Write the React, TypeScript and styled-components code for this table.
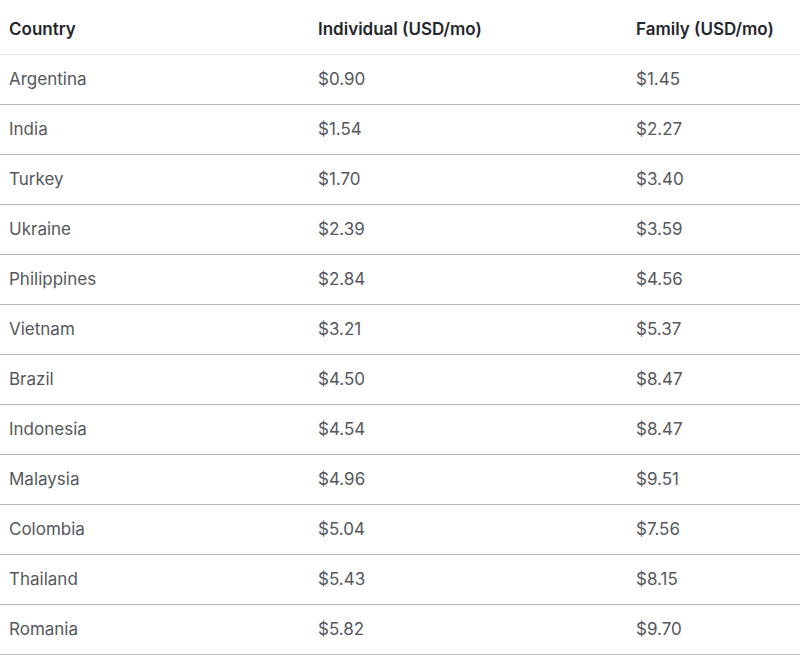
import React from "react";
import styled, { createGlobalStyle } from "styled-components";

const Global = createGlobalStyle`
  html, body { margin: 0; padding: 0; background: #ffffff; }
  body { font-family: Inter, "Noto Sans", sans-serif; -webkit-font-smoothing: antialiased; }
`;

const Table = styled.div`
  width: 800px;
  display: flex;
  flex-direction: column;
`;

const Row = styled.div<{ $head?: boolean }>`
  display: grid;
  grid-template-columns: 309px 318px 1fr;
  height: ${(p) => (p.$head ? "55px" : "50px")};
  box-sizing: border-box;
  padding-top: ${(p) => (p.$head ? "5px" : "0")};
  padding-bottom: 2px;
  align-items: center;
  border-bottom: 1px solid ${(p) => (p.$head ? "#e6e6e6" : "#b9b9b9")};
`;

const Cell = styled.div<{ $head?: boolean }>`
  padding-left: 9px;
  font-size: 17px;
  font-weight: ${(p) => (p.$head ? 600 : 400)};
  color: ${(p) => (p.$head ? "#24272c" : "#55585d")};
  white-space: nowrap;
`;

const data: [string, string, string][] = [
  ["Argentina", "$0.90", "$1.45"],
  ["India", "$1.54", "$2.27"],
  ["Turkey", "$1.70", "$3.40"],
  ["Ukraine", "$2.39", "$3.59"],
  ["Philippines", "$2.84", "$4.56"],
  ["Vietnam", "$3.21", "$5.37"],
  ["Brazil", "$4.50", "$8.47"],
  ["Indonesia", "$4.54", "$8.47"],
  ["Malaysia", "$4.96", "$9.51"],
  ["Colombia", "$5.04", "$7.56"],
  ["Thailand", "$5.43", "$8.15"],
  ["Romania", "$5.82", "$9.70"],
];

export default function App() {
  return (
    <>
      <Global />
      <Table>
        <Row $head>
          <Cell $head>Country</Cell>
          <Cell $head>Individual (USD/mo)</Cell>
          <Cell $head>Family (USD/mo)</Cell>
        </Row>
        {data.map(([c, i, f]) => (
          <Row key={c}>
            <Cell>{c}</Cell>
            <Cell>{i}</Cell>
            <Cell>{f}</Cell>
          </Row>
        ))}
      </Table>
    </>
  );
}
